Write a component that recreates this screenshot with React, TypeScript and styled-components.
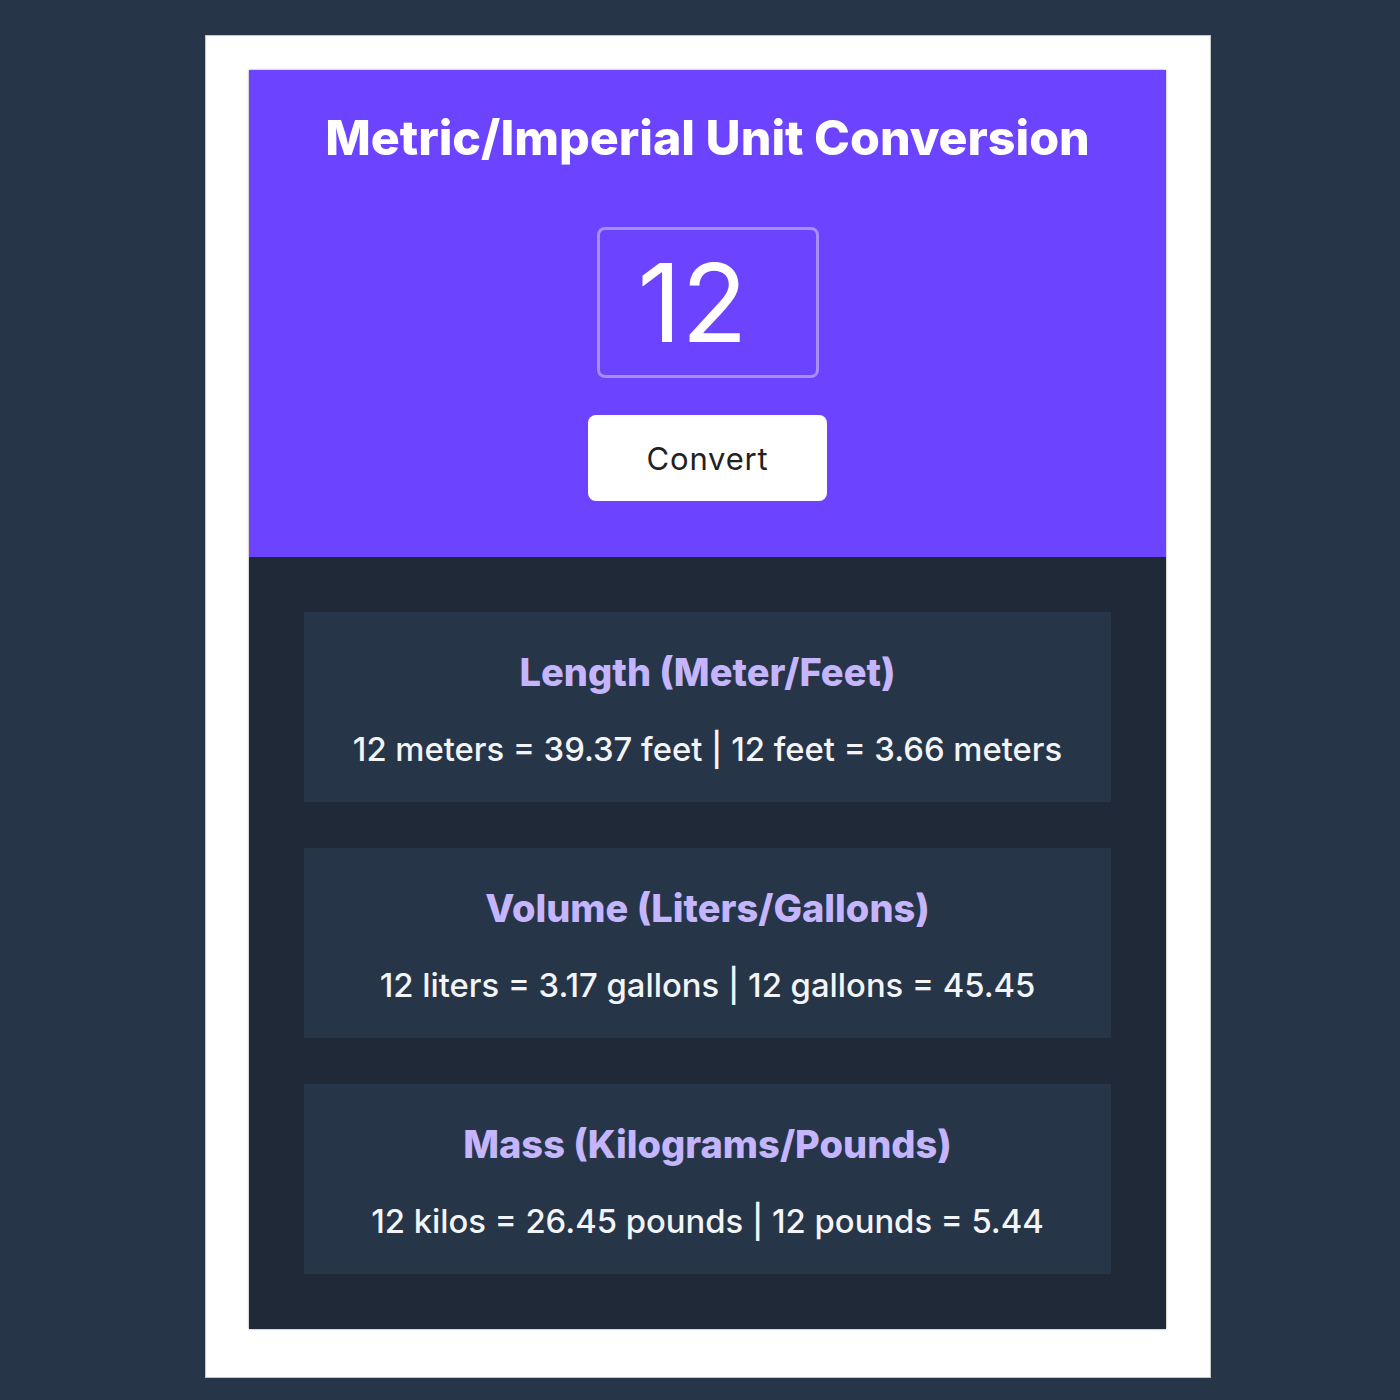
import React, { useState } from "react";
import styled, { createGlobalStyle } from "styled-components";

const GlobalStyle = createGlobalStyle`
  body {
    margin: 0;
    background: #273549;
    font-family: Inter, "Noto Sans", sans-serif;
  }
`;

const conversions = (n: number) => [
  {
    title: "Length (Meter/Feet)",
    text: `${n} meters = ${(n * 3.281).toFixed(2)} feet | ${n} feet = ${(n / 3.281).toFixed(2)} meters`,
  },
  {
    title: "Volume (Liters/Gallons)",
    text: `${n} liters = ${(n * 0.264).toFixed(2)} gallons | ${n} gallons = ${(n / 0.264).toFixed(2)}`,
  },
  {
    title: "Mass (Kilograms/Pounds)",
    text: `${n} kilos = ${(n * 2.204).toFixed(2)} pounds | ${n} pounds = ${(n / 2.204).toFixed(2)}`,
  },
];

const App = () => {
  const [value, setValue] = useState("12");
  const [num, setNum] = useState(12);

  return (
    <Page>
      <GlobalStyle />
      <Frame>
        <Card>
          <Header>
            <Title>Metric/Imperial Unit Conversion</Title>
            <NumberInput
              type="text"
              value={value}
              onChange={(e) => setValue(e.target.value)}
            />
            <ConvertButton onClick={() => setNum(Number(value) || 0)}>
              Convert
            </ConvertButton>
          </Header>
          <Results>
            {conversions(num).map((c) => (
              <Section key={c.title}>
                <SectionTitle>{c.title}</SectionTitle>
                <SectionText>{c.text}</SectionText>
              </Section>
            ))}
          </Results>
        </Card>
      </Frame>
    </Page>
  );
};

export default App;

const Page = styled.div`
  padding: 35px 0 22px 205px;
`;

const Frame = styled.div`
  width: 1006px;
  box-sizing: border-box;
  background: #fff;
  border: 1px solid #c4c4c4;
  padding: 34px 44px 48px 43px;
`;

const Card = styled.div`
  width: 917px;
  box-shadow: 0 0 2px rgba(0, 0, 0, 0.45);
`;

const Header = styled.div`
  height: 487px;
  box-sizing: border-box;
  background: #6c43ff;
  display: flex;
  flex-direction: column;
  align-items: center;
  padding-top: 39px;
`;

const Title = styled.h1`
  margin: 0;
  color: #fff;
  font-size: 48.3px;
  line-height: 58px;
  font-weight: 800;
`;

const NumberInput = styled.input`
  margin-top: 60px;
  width: 222px;
  height: 151px;
  box-sizing: border-box;
  background: transparent;
  border: 3px solid rgba(255, 255, 255, 0.4);
  border-radius: 8px;
  padding: 0 0 0 38px;
  color: #fff;
  font-family: Inter, sans-serif;
  font-size: 108px;
  font-weight: 400;
  outline: none;
`;

const ConvertButton = styled.button`
  margin-top: 37px;
  width: 239px;
  height: 86px;
  border: none;
  border-radius: 8px;
  background: #fff;
  color: #222;
  font-family: Inter, sans-serif;
  font-size: 31px;
  letter-spacing: 0.8px;
  cursor: pointer;
`;

const Results = styled.div`
  background: #1f2937;
  padding: 55px;
  display: flex;
  flex-direction: column;
  gap: 46px;
`;

const Section = styled.div`
  height: 190px;
  box-sizing: border-box;
  background: #273549;
  display: flex;
  flex-direction: column;
  align-items: center;
  padding-top: 36px;
  gap: 33px;
`;

const SectionTitle = styled.h2`
  margin: 0;
  color: #c4b5fd;
  font-size: 38px;
  line-height: 48px;
  font-weight: 800;
`;

const SectionText = styled.p`
  margin: 0;
  color: #f3f4f6;
  font-size: 32.8px;
  line-height: 40px;
  font-weight: 500;
`;
